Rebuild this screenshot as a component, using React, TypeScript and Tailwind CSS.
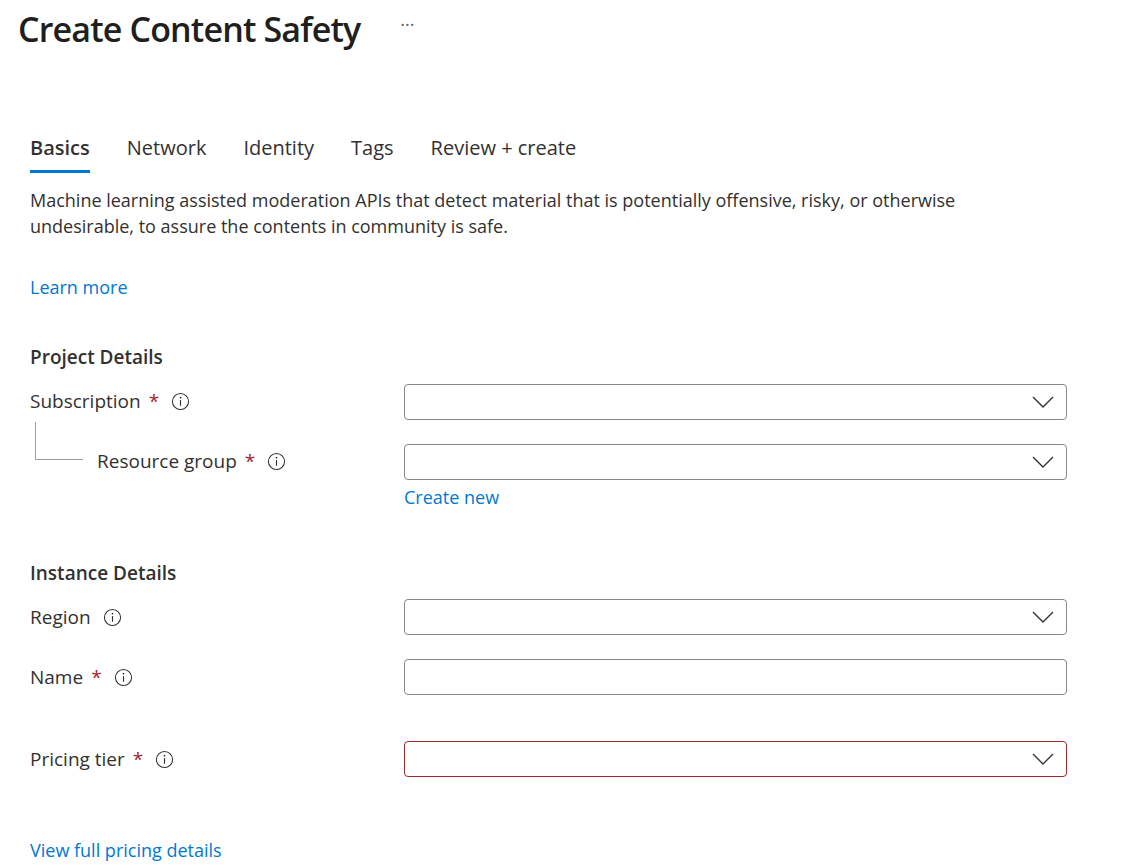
import React from "react";

const font = { fontFamily: '"Segoe UI", "Open Sans", sans-serif' };

function Info() {
  return (
    <svg width="19" height="19" viewBox="0 0 20 20" className="text-[#323130]">
      <circle cx="10" cy="10" r="8.5" fill="none" stroke="currentColor" strokeWidth="1.1" />
      <line x1="10" y1="8.5" x2="10" y2="14.5" stroke="currentColor" strokeWidth="1.2" />
      <circle cx="10" cy="6" r="0.9" fill="currentColor" />
    </svg>
  );
}

function Chevron() {
  return (
    <svg width="22" height="12" viewBox="0 0 22 12" className="text-[#323130]">
      <path d="M1 1l10 10 10-10" fill="none" stroke="currentColor" strokeWidth="1.4" />
    </svg>
  );
}

function Field({ error, select = true }: { error?: boolean; select?: boolean }) {
  return (
    <div
      className={`w-[663px] h-9 rounded-sm border flex items-center justify-end pr-3 ${
        error ? "border-[#a4262c]" : "border-[#8a8886]"
      }`}
    >
      {select && <Chevron />}
    </div>
  );
}

function Label({ text, req }: { text: string; req?: boolean }) {
  return (
    <div className="flex items-center text-[19px] text-[#323130]">
      <span>{text}</span>
      {req && <span className="ml-2 text-[#a4262c]">*</span>}
      <span className="ml-3 flex"><Info /></span>
    </div>
  );
}

export default function App() {
  return (
    <div className="w-[1137px] h-[868px] bg-white overflow-hidden text-[#323130]" style={font}>
      <div className="flex items-center pl-[18px] pt-1">
        <h1 className="text-[34px] font-semibold tracking-tight text-[#201f1e]">Create Content Safety</h1>
        <span className="ml-10 text-lg text-[#605e5c] -mt-3">···</span>
      </div>

      <div className="pl-[30px]">
        <div className="flex gap-[37px] mt-[78px] text-[20px]">
          <div className="flex flex-col">
            <span className="font-semibold">Basics</span>
            <div className="h-[3px] bg-[#0078d4] mt-[7px]" />
          </div>
          <span>Network</span>
          <span>Identity</span>
          <span>Tags</span>
          <span>Review + create</span>
        </div>

        <p className="mt-[14px] text-[18px] leading-[26px] w-[980px]">
          Machine learning assisted moderation APIs that detect material that is potentially offensive, risky, or otherwise undesirable, to assure the contents in community is safe.
        </p>
        <div className="mt-[35px] text-[18px] text-[#0078d4]">Learn more</div>

        <div className="mt-[42px] text-[19px] font-semibold">Project Details</div>

        <div className="flex items-center justify-between w-[1037px] mt-[12px]">
          <Label text="Subscription" req />
          <Field />
        </div>
        <div className="flex items-center justify-between w-[1037px] mt-[24px] relative">
          <div className="absolute left-[5px] -top-[22px] w-[48px] h-[38px] border-l border-b border-[#a19f9d]" />
          <div className="pl-[67px]"><Label text="Resource group" req /></div>
          <Field />
        </div>
        <div className="ml-[374px] mt-[4px] text-[18px] text-[#0078d4]">Create new</div>

        <div className="mt-[48px] text-[19px] font-semibold">Instance Details</div>
        <div className="flex items-center justify-between w-[1037px] mt-[12px]">
          <Label text="Region" />
          <Field />
        </div>
        <div className="flex items-center justify-between w-[1037px] mt-[24px]">
          <Label text="Name" req />
          <Field select={false} />
        </div>
        <div className="flex items-center justify-between w-[1037px] mt-[46px]">
          <Label text="Pricing tier" req />
          <Field error />
        </div>
        <div className="mt-[60px] text-[18px] text-[#0078d4]">View full pricing details</div>
      </div>
    </div>
  );
}
